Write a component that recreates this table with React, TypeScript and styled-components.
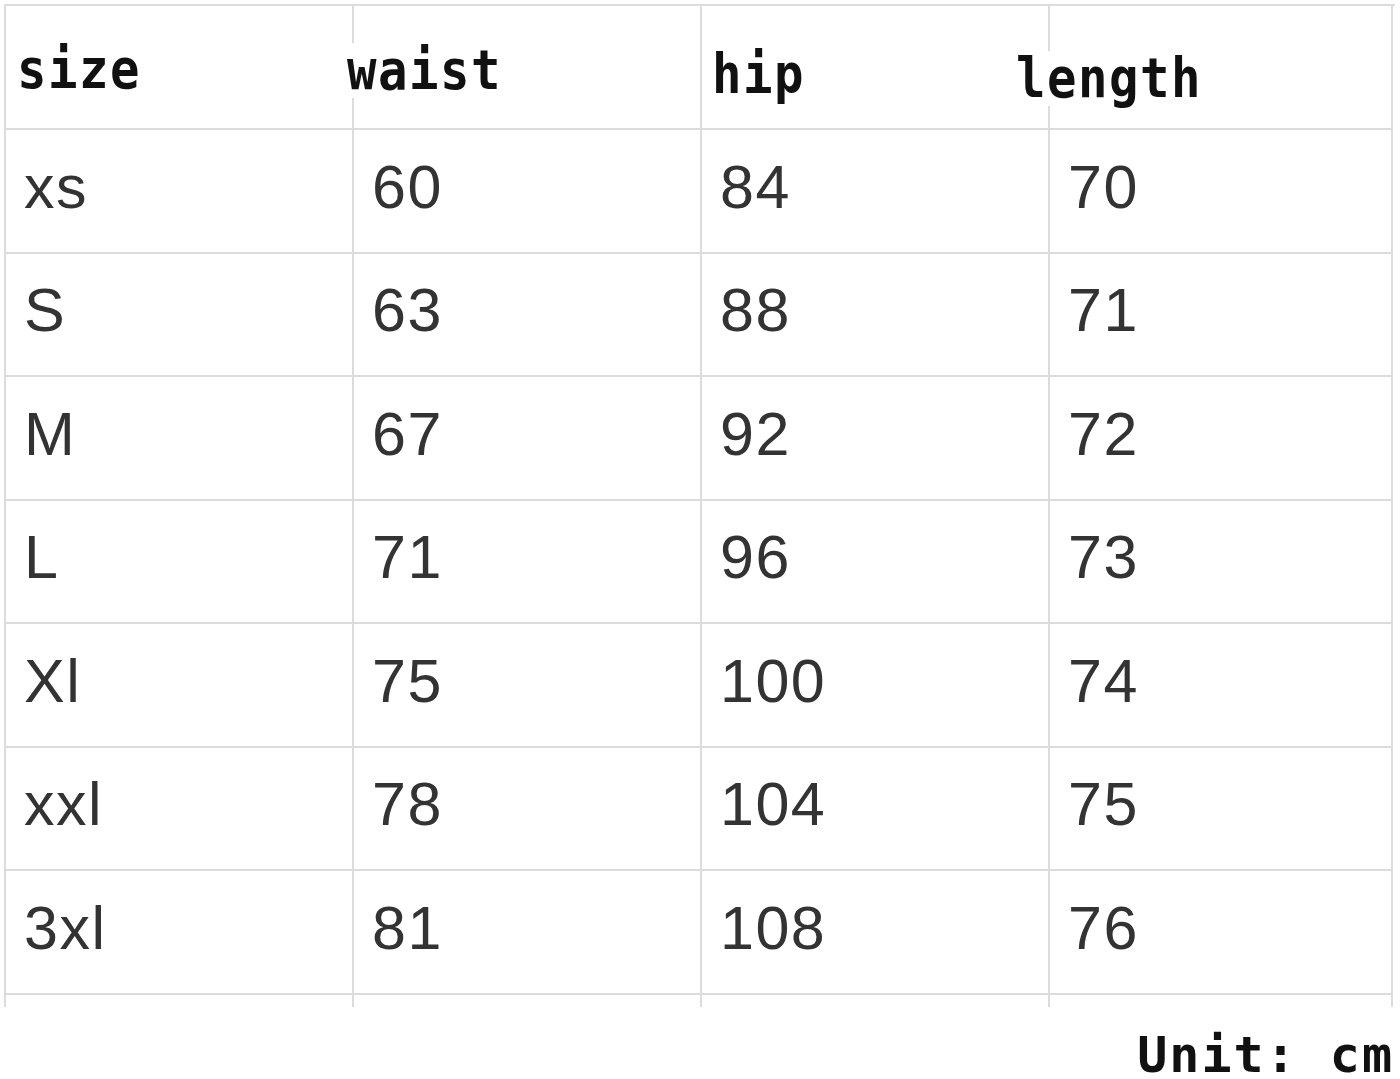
import React from "react";
import styled, { createGlobalStyle } from "styled-components";

const Global = createGlobalStyle`
  html, body { margin: 0; padding: 0; background: #ffffff; }
  body { width: 1400px; height: 1079px; overflow: hidden; }
`;

const Page = styled.div`
  width: 1400px;
  height: 1079px;
  box-sizing: border-box;
  padding: 4px 0 0 4px;
  display: flex;
  flex-direction: column;
`;

const LINE = "#dcdcdc";

const Table = styled.div`
  display: grid;
  grid-template-columns: 348px 348px 348px 345px;
  grid-template-rows: 124px 124px 123px 124px 123px 124px 123px 124px 12px;
  width: 1391px;
  border-top: 2px solid ${LINE};
  box-sizing: border-box;
`;

const Cell = styled.div<{ $last?: boolean; $tail?: boolean }>`
  box-sizing: border-box;
  border-left: 2px solid ${LINE};
  ${(p) => (p.$last ? `border-right: 2px solid ${LINE};` : "")}
  ${(p) => (p.$tail ? "" : `border-bottom: 2px solid ${LINE};`)}
  display: flex;
  align-items: center;
  overflow: visible;
  position: relative;
`;

const HeadLabel = styled.span<{ $dx: number; $dy: number }>`
  font-family: "DejaVu Sans Mono", "Liberation Mono", monospace;
  font-weight: 700;
  font-size: 49px;
  letter-spacing: 1.5px;
  line-height: 1;
  color: #111111;
  margin-left: ${(p) => p.$dx}px;
  margin-top: ${(p) => p.$dy}px;
  white-space: nowrap;
  transform: scaleY(1.12);
  background: #ffffff;
`;

const Value = styled.span`
  font-family: "Liberation Sans", Arial, sans-serif;
  font-size: 61px;
  line-height: 1;
  color: #333333;
  margin-left: 18px;
  margin-bottom: 8px;
  letter-spacing: 1.5px;
`;

const Footer = styled.div`
  display: flex;
  justify-content: flex-end;
  padding: 28px 6px 0 0;
`;

const Unit = styled.span`
  font-family: "DejaVu Sans Mono", "Liberation Mono", monospace;
  font-weight: 700;
  font-size: 50px;
  letter-spacing: 2px;
  line-height: 0.8;
  color: #111111;
  white-space: pre;
`;

const headers: { label: string; dx: number; dy: number }[] = [
  { label: "size", dx: 11, dy: 4 },
  { label: "waist", dx: -7, dy: 6 },
  { label: "hip", dx: 10, dy: 14 },
  { label: "length", dx: -34, dy: 22 },
];

const rows: string[][] = [
  ["xs", "60", "84", "70"],
  ["S", "63", "88", "71"],
  ["M", "67", "92", "72"],
  ["L", "71", "96", "73"],
  ["Xl", "75", "100", "74"],
  ["xxl", "78", "104", "75"],
  ["3xl", "81", "108", "76"],
];

export default function App() {
  return (
    <>
      <Global />
      <Page>
        <Table>
          {headers.map((h, i) => (
            <Cell key={h.label} $last={i === 3}>
              <HeadLabel $dx={h.dx} $dy={h.dy}>
                {h.label}
              </HeadLabel>
            </Cell>
          ))}
          {rows.map((r, ri) =>
            r.map((v, ci) => (
              <Cell key={`${ri}-${ci}`} $last={ci === 3}>
                <Value>{v}</Value>
              </Cell>
            ))
          )}
          {[0, 1, 2, 3].map((i) => (
            <Cell key={`t${i}`} $tail $last={i === 3} />
          ))}
        </Table>
        <Footer>
          <Unit>Unit: cm</Unit>
        </Footer>
      </Page>
    </>
  );
}
